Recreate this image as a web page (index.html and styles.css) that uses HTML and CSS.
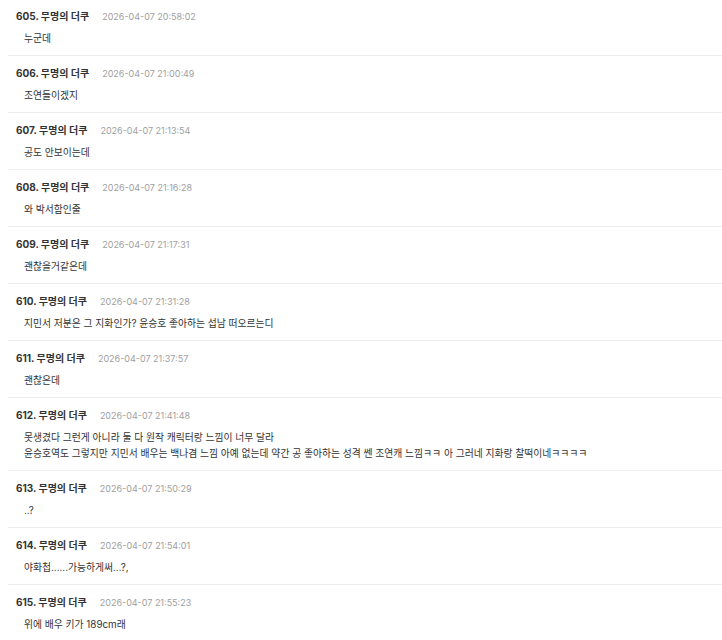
FILE: index.html
```html
<!DOCTYPE html>
<html lang="ko">
<head>
    <meta charset="UTF-8">
    <meta name="viewport" content="width=device-width, initial-scale=1.0">
    <title>댓글</title>
    <link rel="stylesheet" href="styles.css">
</head>
<body>
    <ul class="comments">
        <li class="comment">
            <div class="comment-head"><span class="comment-name">605. 무명의 더쿠</span><span class="comment-date">2026-04-07 20:58:02</span></div>
            <div class="comment-body">누군데</div>
        </li>
        <li class="comment">
            <div class="comment-head"><span class="comment-name">606. 무명의 더쿠</span><span class="comment-date">2026-04-07 21:00:49</span></div>
            <div class="comment-body">조연들이겠지</div>
        </li>
        <li class="comment">
            <div class="comment-head"><span class="comment-name">607. 무명의 더쿠</span><span class="comment-date">2026-04-07 21:13:54</span></div>
            <div class="comment-body">공도 안보이는데</div>
        </li>
        <li class="comment">
            <div class="comment-head"><span class="comment-name">608. 무명의 더쿠</span><span class="comment-date">2026-04-07 21:16:28</span></div>
            <div class="comment-body">와 박서함인줄</div>
        </li>
        <li class="comment">
            <div class="comment-head"><span class="comment-name">609. 무명의 더쿠</span><span class="comment-date">2026-04-07 21:17:31</span></div>
            <div class="comment-body">괜찮을거같은데</div>
        </li>
        <li class="comment">
            <div class="comment-head"><span class="comment-name">610. 무명의 더쿠</span><span class="comment-date">2026-04-07 21:31:28</span></div>
            <div class="comment-body">지민서 저분은 그 지화인가? 윤승호 좋아하는 섭남 떠오르는디</div>
        </li>
        <li class="comment">
            <div class="comment-head"><span class="comment-name">611. 무명의 더쿠</span><span class="comment-date">2026-04-07 21:37:57</span></div>
            <div class="comment-body">괜찮은데</div>
        </li>
        <li class="comment">
            <div class="comment-head"><span class="comment-name">612. 무명의 더쿠</span><span class="comment-date">2026-04-07 21:41:48</span></div>
            <div class="comment-body">못생겼다 그런게 아니라 둘 다 원작 캐릭터랑 느낌이 너무 달라<br>윤승호역도 그렇지만 지민서 배우는 백나겸 느낌 아예 없는데 약간 공 좋아하는 성격 쎈 조연캐 느낌ㅋㅋ 아 그러네 지화랑 찰떡이네ㅋㅋㅋㅋ</div>
        </li>
        <li class="comment">
            <div class="comment-head"><span class="comment-name">613. 무명의 더쿠</span><span class="comment-date">2026-04-07 21:50:29</span></div>
            <div class="comment-body">..?</div>
        </li>
        <li class="comment">
            <div class="comment-head"><span class="comment-name">614. 무명의 더쿠</span><span class="comment-date">2026-04-07 21:54:01</span></div>
            <div class="comment-body">야화첩......가능하게써...?,</div>
        </li>
        <li class="comment">
            <div class="comment-head"><span class="comment-name">615. 무명의 더쿠</span><span class="comment-date">2026-04-07 21:55:23</span></div>
            <div class="comment-body">위에 배우 키가 189cm래</div>
        </li>
    </ul>
</body>
</html>
```

FILE: styles.css
```css
body {
    font-family: Inter, "Noto Sans CJK KR", sans-serif;
    background-color: #fff;
    color: #333;
    margin: 0;
    overflow: hidden;
}
.comments {
    list-style: none;
    margin: -1px 0 0 8px;
    padding: 0;
}
.comment {
    padding: 10px 0 8px 8px;
    border-bottom: 1px solid #ededed;
}
.comment-head {
    display: flex;
    align-items: baseline;
    gap: 13px;
    height: 14px;
    line-height: 14px;
    margin-bottom: 8px;
}
.comment-name {
    font-size: 10px;
    font-weight: bold;
    color: #333;
}
.comment-date {
    font-size: 9px;
    color: #a0a0a0;
}
.comment-body {
    font-size: 9.8px;
    line-height: 16px;
    padding-left: 8px;
    color: #333;
}
```
